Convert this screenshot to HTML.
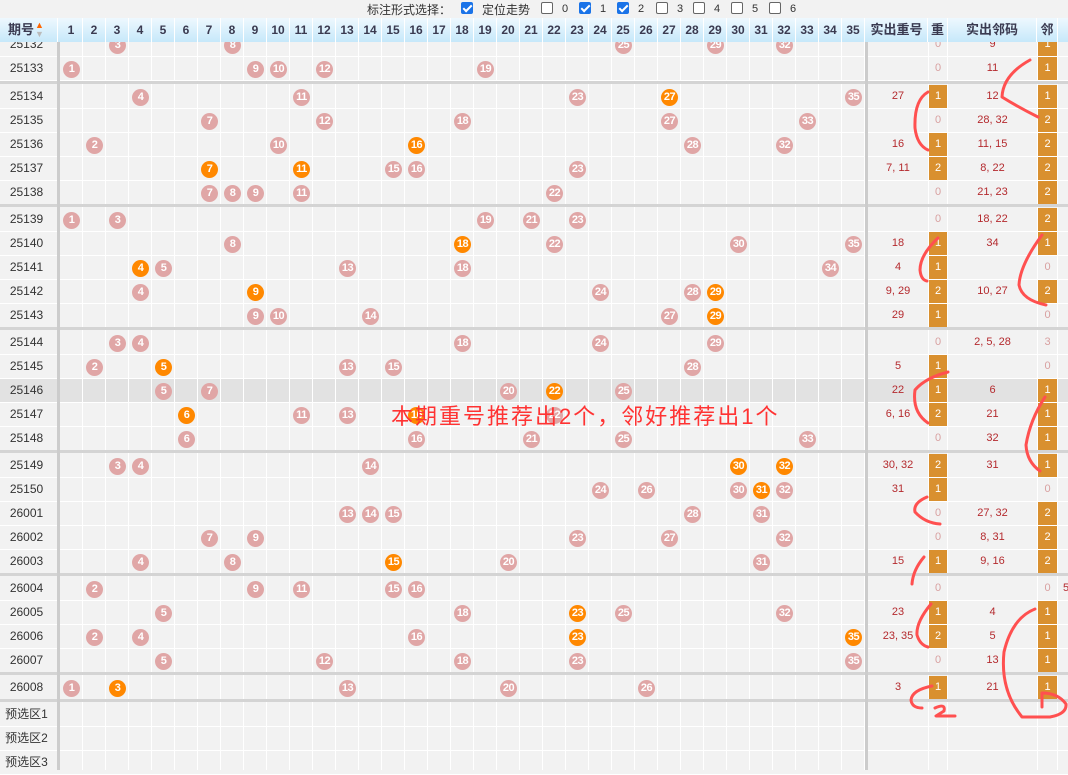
<!DOCTYPE html>
<html><head><meta charset="utf-8"><style>
*{margin:0;padding:0;box-sizing:border-box}
body{width:1068px;height:770px;overflow:hidden;background:#f2f2f2;position:relative;font-family:"Liberation Sans","Noto Sans CJK SC",sans-serif}
.top{position:absolute;top:0;left:0;width:1068px;height:18px;background:#f2f2f2;font-size:12px;color:#333}
.top span{position:absolute;top:1px;white-space:nowrap}
.top .d{font-size:11px;top:3px}
.cb{position:absolute;top:2px;width:12px;height:12px;border:1px solid #666;border-radius:2px;background:#fff}
.cb.on{background:#1a73e8;border-color:#1a73e8}
.cb.on:after{content:"";position:absolute;left:3px;top:0px;width:3px;height:7px;border:solid #fff;border-width:0 2px 2px 0;transform:rotate(45deg)}
.hd{position:absolute;top:18px;left:0;width:1068px;height:24px;background:linear-gradient(#eef8fe,#c6e8fa);z-index:5;font-weight:bold;font-size:12px;color:#3a3a50}
.hd span{position:absolute;top:0;height:24px;line-height:24px;text-align:center;border-right:1px solid #fff}
.hd .n{left:calc(var(--n)*23px + 37px);width:23px}
.r{position:absolute;left:0;width:1068px;height:24px;border-bottom:1px solid #fff}
.r.hl{background:#e2e2e2}
.p{position:absolute;left:0;width:53px;top:0;line-height:23px;text-align:center;font-size:12px;color:#333}
.r b{position:absolute;z-index:2;top:4px;left:calc(var(--n)*23px + 40px);width:17px;height:17px;border-radius:50%;background:#e0a6a6;color:#fff;font-size:11px;line-height:17px;text-align:center;font-weight:bold;letter-spacing:-0.5px}
.r b.o{background:#ff8800}
.r i{position:absolute;z-index:2;top:0;height:23px;line-height:23px;text-align:center;font-style:normal;font-size:11px;color:#b42a2e}
.a{left:868px;width:60px}
.h{left:929px;width:18px;background:#d9902f;color:#fff!important}
.m{left:948px;width:89px}
.l{left:1038px;width:19px;background:#d9902f;color:#fff!important}
.r i.z{background:none;color:#d8a0a0!important}
.vl{position:absolute;top:42px;height:728px;z-index:1}
.sep{position:absolute;left:0;width:1068px;height:3px;background:#d4d4d4;z-index:3}
.msg{position:absolute;left:391px;top:399px;font-size:22px;color:#f33;z-index:6;white-space:nowrap;letter-spacing:2px}
svg{position:absolute;left:0;top:0;z-index:7}
</style></head><body>
<div class="top">
<span style="left:367px">标注形式选择：</span>
<div class="cb on" style="left:461px"></div><span style="left:482px">定位走势</span>
<div class="cb" style="left:541px"></div><span class="d" style="left:562px">0</span>
<div class="cb on" style="left:579px"></div><span class="d" style="left:600px">1</span>
<div class="cb on" style="left:617px"></div><span class="d" style="left:638px">2</span>
<div class="cb" style="left:656px"></div><span class="d" style="left:677px">3</span>
<div class="cb" style="left:693px"></div><span class="d" style="left:714px">4</span>
<div class="cb" style="left:731px"></div><span class="d" style="left:752px">5</span>
<div class="cb" style="left:769px"></div><span class="d" style="left:790px">6</span>
</div>
<div class="hd">
<span style="left:0;width:58px;font-size:13px;text-align:left;padding-left:8px">期号<span style="position:absolute;left:35px;top:-5px;border:0;color:#f60;font-size:9px">▲</span><span style="position:absolute;left:35px;top:4px;border:0;color:#bbb;font-size:9px">▼</span></span>
<span class="n" style="--n:1">1</span><span class="n" style="--n:2">2</span><span class="n" style="--n:3">3</span><span class="n" style="--n:4">4</span><span class="n" style="--n:5">5</span><span class="n" style="--n:6">6</span><span class="n" style="--n:7">7</span><span class="n" style="--n:8">8</span><span class="n" style="--n:9">9</span><span class="n" style="--n:10">10</span><span class="n" style="--n:11">11</span><span class="n" style="--n:12">12</span><span class="n" style="--n:13">13</span><span class="n" style="--n:14">14</span><span class="n" style="--n:15">15</span><span class="n" style="--n:16">16</span><span class="n" style="--n:17">17</span><span class="n" style="--n:18">18</span><span class="n" style="--n:19">19</span><span class="n" style="--n:20">20</span><span class="n" style="--n:21">21</span><span class="n" style="--n:22">22</span><span class="n" style="--n:23">23</span><span class="n" style="--n:24">24</span><span class="n" style="--n:25">25</span><span class="n" style="--n:26">26</span><span class="n" style="--n:27">27</span><span class="n" style="--n:28">28</span><span class="n" style="--n:29">29</span><span class="n" style="--n:30">30</span><span class="n" style="--n:31">31</span><span class="n" style="--n:32">32</span><span class="n" style="--n:33">33</span><span class="n" style="--n:34">34</span><span class="n" style="--n:35">35</span>
<span style="left:866px;width:62px;font-size:13px">实出重号</span>
<span style="left:928px;width:20px;font-size:13px">重</span>
<span style="left:948px;width:89px;font-size:13px">实出邻码</span>
<span style="left:1037px;width:21px;font-size:13px">邻</span>
</div>
<div class="vl" style="left:60px;width:805px;background:repeating-linear-gradient(90deg,transparent 0 22px,#fff 22px 23px)"></div>
<div class="vl" style="left:57px;width:3px;background:#ccc;z-index:4"></div>
<div class="vl" style="left:865px;width:3px;background:#ccc;z-index:4"></div>
<div class="vl" style="left:928px;width:1px;background:#fff"></div>
<div class="vl" style="left:947px;width:1px;background:#fff"></div>
<div class="vl" style="left:1037px;width:1px;background:#fff"></div>
<div class="vl" style="left:1057px;width:1px;background:#fff"></div>

<div class="r" style="top:33px"><div class="p">25132</div><b style="--n:3">3</b><b style="--n:8">8</b><b style="--n:25">25</b><b style="--n:29">29</b><b style="--n:32">32</b><i class="h z">0</i><i class="m">9</i><i class="l">1</i></div>
<div class="r" style="top:57px"><div class="p">25133</div><b style="--n:1">1</b><b style="--n:9">9</b><b style="--n:10">10</b><b style="--n:12">12</b><b style="--n:19">19</b><i class="h z">0</i><i class="m">11</i><i class="l">1</i></div>
<div class="sep" style="top:81px"></div>
<div class="r" style="top:85px"><div class="p">25134</div><b style="--n:4">4</b><b style="--n:11">11</b><b style="--n:23">23</b><b class="o" style="--n:27">27</b><b style="--n:35">35</b><i class="a">27</i><i class="h">1</i><i class="m">12</i><i class="l">1</i></div>
<div class="r" style="top:109px"><div class="p">25135</div><b style="--n:7">7</b><b style="--n:12">12</b><b style="--n:18">18</b><b style="--n:27">27</b><b style="--n:33">33</b><i class="h z">0</i><i class="m">28, 32</i><i class="l">2</i></div>
<div class="r" style="top:133px"><div class="p">25136</div><b style="--n:2">2</b><b style="--n:10">10</b><b class="o" style="--n:16">16</b><b style="--n:28">28</b><b style="--n:32">32</b><i class="a">16</i><i class="h">1</i><i class="m">11, 15</i><i class="l">2</i></div>
<div class="r" style="top:157px"><div class="p">25137</div><b class="o" style="--n:7">7</b><b class="o" style="--n:11">11</b><b style="--n:15">15</b><b style="--n:16">16</b><b style="--n:23">23</b><i class="a">7, 11</i><i class="h">2</i><i class="m">8, 22</i><i class="l">2</i></div>
<div class="r" style="top:181px"><div class="p">25138</div><b style="--n:7">7</b><b style="--n:8">8</b><b style="--n:9">9</b><b style="--n:11">11</b><b style="--n:22">22</b><i class="h z">0</i><i class="m">21, 23</i><i class="l">2</i></div>
<div class="sep" style="top:204px"></div>
<div class="r" style="top:208px"><div class="p">25139</div><b style="--n:1">1</b><b style="--n:3">3</b><b style="--n:19">19</b><b style="--n:21">21</b><b style="--n:23">23</b><i class="h z">0</i><i class="m">18, 22</i><i class="l">2</i></div>
<div class="r" style="top:232px"><div class="p">25140</div><b style="--n:8">8</b><b class="o" style="--n:18">18</b><b style="--n:22">22</b><b style="--n:30">30</b><b style="--n:35">35</b><i class="a">18</i><i class="h">1</i><i class="m">34</i><i class="l">1</i></div>
<div class="r" style="top:256px"><div class="p">25141</div><b class="o" style="--n:4">4</b><b style="--n:5">5</b><b style="--n:13">13</b><b style="--n:18">18</b><b style="--n:34">34</b><i class="a">4</i><i class="h">1</i><i class="l z">0</i></div>
<div class="r" style="top:280px"><div class="p">25142</div><b style="--n:4">4</b><b class="o" style="--n:9">9</b><b style="--n:24">24</b><b style="--n:28">28</b><b class="o" style="--n:29">29</b><i class="a">9, 29</i><i class="h">2</i><i class="m">10, 27</i><i class="l">2</i></div>
<div class="r" style="top:304px"><div class="p">25143</div><b style="--n:9">9</b><b style="--n:10">10</b><b style="--n:14">14</b><b style="--n:27">27</b><b class="o" style="--n:29">29</b><i class="a">29</i><i class="h">1</i><i class="l z">0</i></div>
<div class="sep" style="top:327px"></div>
<div class="r" style="top:331px"><div class="p">25144</div><b style="--n:3">3</b><b style="--n:4">4</b><b style="--n:18">18</b><b style="--n:24">24</b><b style="--n:29">29</b><i class="h z">0</i><i class="m">2, 5, 28</i><i class="l z">3</i></div>
<div class="r" style="top:355px"><div class="p">25145</div><b style="--n:2">2</b><b class="o" style="--n:5">5</b><b style="--n:13">13</b><b style="--n:15">15</b><b style="--n:28">28</b><i class="a">5</i><i class="h">1</i><i class="l z">0</i></div>
<div class="r hl" style="top:379px"><div class="p">25146</div><b style="--n:5">5</b><b style="--n:7">7</b><b style="--n:20">20</b><b class="o" style="--n:22">22</b><b style="--n:25">25</b><i class="a">22</i><i class="h">1</i><i class="m">6</i><i class="l">1</i></div>
<div class="r" style="top:403px"><div class="p">25147</div><b class="o" style="--n:6">6</b><b style="--n:11">11</b><b style="--n:13">13</b><b class="o" style="--n:16">16</b><b style="--n:22">22</b><i class="a">6, 16</i><i class="h">2</i><i class="m">21</i><i class="l">1</i></div>
<div class="r" style="top:427px"><div class="p">25148</div><b style="--n:6">6</b><b style="--n:16">16</b><b style="--n:21">21</b><b style="--n:25">25</b><b style="--n:33">33</b><i class="h z">0</i><i class="m">32</i><i class="l">1</i></div>
<div class="sep" style="top:450px"></div>
<div class="r" style="top:454px"><div class="p">25149</div><b style="--n:3">3</b><b style="--n:4">4</b><b style="--n:14">14</b><b class="o" style="--n:30">30</b><b class="o" style="--n:32">32</b><i class="a">30, 32</i><i class="h">2</i><i class="m">31</i><i class="l">1</i></div>
<div class="r" style="top:478px"><div class="p">25150</div><b style="--n:24">24</b><b style="--n:26">26</b><b style="--n:30">30</b><b class="o" style="--n:31">31</b><b style="--n:32">32</b><i class="a">31</i><i class="h">1</i><i class="l z">0</i></div>
<div class="r" style="top:502px"><div class="p">26001</div><b style="--n:13">13</b><b style="--n:14">14</b><b style="--n:15">15</b><b style="--n:28">28</b><b style="--n:31">31</b><i class="h z">0</i><i class="m">27, 32</i><i class="l">2</i></div>
<div class="r" style="top:526px"><div class="p">26002</div><b style="--n:7">7</b><b style="--n:9">9</b><b style="--n:23">23</b><b style="--n:27">27</b><b style="--n:32">32</b><i class="h z">0</i><i class="m">8, 31</i><i class="l">2</i></div>
<div class="r" style="top:550px"><div class="p">26003</div><b style="--n:4">4</b><b style="--n:8">8</b><b class="o" style="--n:15">15</b><b style="--n:20">20</b><b style="--n:31">31</b><i class="a">15</i><i class="h">1</i><i class="m">9, 16</i><i class="l">2</i></div>
<div class="sep" style="top:573px"></div>
<div class="r" style="top:577px"><div class="p">26004</div><b style="--n:2">2</b><b style="--n:9">9</b><b style="--n:11">11</b><b style="--n:15">15</b><b style="--n:16">16</b><i class="h z">0</i><i class="l z">0</i><i style="left:1062px;width:8px">5</i></div>
<div class="r" style="top:601px"><div class="p">26005</div><b style="--n:5">5</b><b style="--n:18">18</b><b class="o" style="--n:23">23</b><b style="--n:25">25</b><b style="--n:32">32</b><i class="a">23</i><i class="h">1</i><i class="m">4</i><i class="l">1</i></div>
<div class="r" style="top:625px"><div class="p">26006</div><b style="--n:2">2</b><b style="--n:4">4</b><b style="--n:16">16</b><b class="o" style="--n:23">23</b><b class="o" style="--n:35">35</b><i class="a">23, 35</i><i class="h">2</i><i class="m">5</i><i class="l">1</i></div>
<div class="r" style="top:649px"><div class="p">26007</div><b style="--n:5">5</b><b style="--n:12">12</b><b style="--n:18">18</b><b style="--n:23">23</b><b style="--n:35">35</b><i class="h z">0</i><i class="m">13</i><i class="l">1</i></div>
<div class="sep" style="top:672px"></div>
<div class="r" style="top:676px"><div class="p">26008</div><b style="--n:1">1</b><b class="o" style="--n:3">3</b><b style="--n:13">13</b><b style="--n:20">20</b><b style="--n:26">26</b><i class="a">3</i><i class="h">1</i><i class="m">21</i><i class="l">1</i></div>
<div class="sep" style="top:699px"></div>
<div class="r" style="top:703px"><div class="p">预选区1</div></div>
<div class="r" style="top:727px"><div class="p">预选区2</div></div>
<div class="r" style="top:751px"><div class="p">预选区3</div></div>

<div class="msg">本期重号推荐出2个，邻好推荐出1个</div>
<svg width="1068" height="770" fill="none" stroke="#ff5050" stroke-width="3" stroke-linecap="round" stroke-linejoin="round">
<path d="M1030,60 Q1003,75 1002,97 Q1018,107 1038,117"/>
<path d="M928,92 Q914,100 915,128 Q917,145 928,150"/>
<path d="M938,238 Q920,255 920,270 Q921,280 927,281"/>
<path d="M1042,235 Q1020,265 1019,285 Q1022,300 1046,305"/>
<path d="M948,372 Q925,378 915,390 Q912,412 928,423"/>
<path d="M1045,397 Q1030,420 1026,445 Q1027,462 1040,471"/>
<path d="M927,497 Q913,503 915,512 Q925,523 940,524"/>
<path d="M924,557 Q913,570 912,584"/>
<path d="M931,604 Q916,622 917,635 Q920,645 928,647"/>
<path d="M1035,609 Q1012,618 1004,652 Q1000,690 1022,717 L1050,717 Q1067,714 1066,704 Q1058,693 1042,693 L1042,707"/>
<path d="M932,686 Q912,690 911,700 Q912,708 922,708"/>
<path d="M935,708 Q946,703 944,711 L936,716 L955,716"/>
</svg>
</body></html>
